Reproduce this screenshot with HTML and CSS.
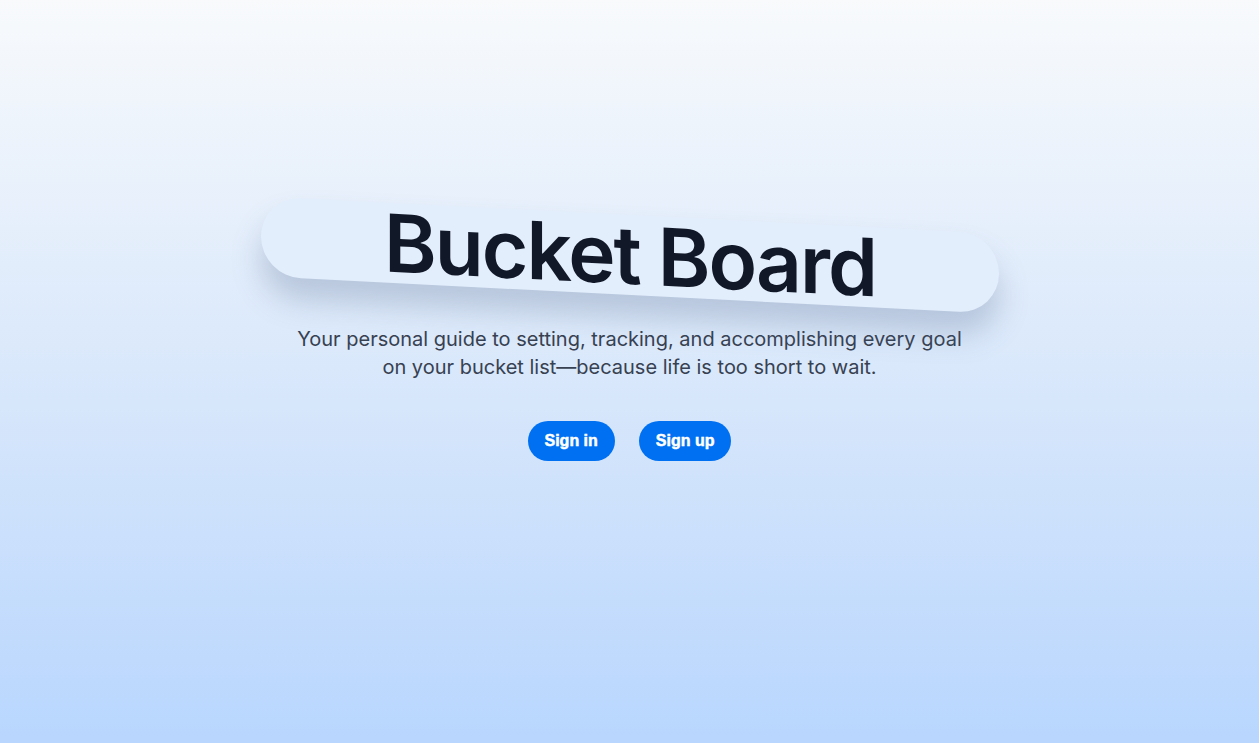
FILE: index.html
```html
<!DOCTYPE html>
<html lang="en">
<head>
<meta charset="utf-8">
<title>Bucket Board</title>
<link rel="stylesheet" href="styles.css">
</head>
<body>
<main class="hero">
  <div class="title-wrap">
    <h1 class="title">Bucket Board</h1>
  </div>
  <p class="tagline">Your personal guide to setting, tracking, and accomplishing every goal on your bucket list—because life is too short to wait.</p>
  <div class="actions">
    <a class="btn" href="#">Sign in</a>
    <a class="btn" href="#">Sign up</a>
  </div>
</main>
</body>
</html>
```
FILE: styles.css
```css
* { box-sizing: border-box; }
html, body { margin: 0; height: 100%; }
body {
  font-family: Inter, "Noto Sans", sans-serif;
  background: linear-gradient(180deg, #f8fafc 0%, #d6e6fb 55%, #b8d6fe 100%);
  overflow: hidden;
}
.hero {
  min-height: 100vh;
  display: flex;
  flex-direction: column;
  align-items: center;
  justify-content: center;
  padding-bottom: 68px;
}
.title-wrap {
  transform: skewY(2.9deg);
}
.title {
  margin: 0;
  width: 738px;
  height: 80px;
  border-radius: 40px;
  background: #e3eefc;
  box-shadow: 0 22px 30px rgba(80, 100, 140, 0.28);
  display: flex;
  align-items: center;
  justify-content: center;
  font-size: 80px;
  font-weight: 600;
  letter-spacing: -2px;
  color: #111827;
  line-height: 1;
}
.tagline {
  margin: 30px 0 0;
  max-width: 680px;
  text-align: center;
  font-size: 20px;
  line-height: 28px;
  color: #374151;
}
.actions {
  display: flex;
  gap: 24px;
  margin-top: 40px;
}
.btn {
  display: inline-flex;
  align-items: center;
  height: 40px;
  padding: 0 17px;
  border-radius: 20px;
  background: #0070f3;
  color: #fff;
  text-decoration: none;
  font-family: "Liberation Sans", Arial, sans-serif;
  font-weight: 700;
  font-size: 16px;
  -webkit-text-stroke: 0.5px #fff;
}
```
